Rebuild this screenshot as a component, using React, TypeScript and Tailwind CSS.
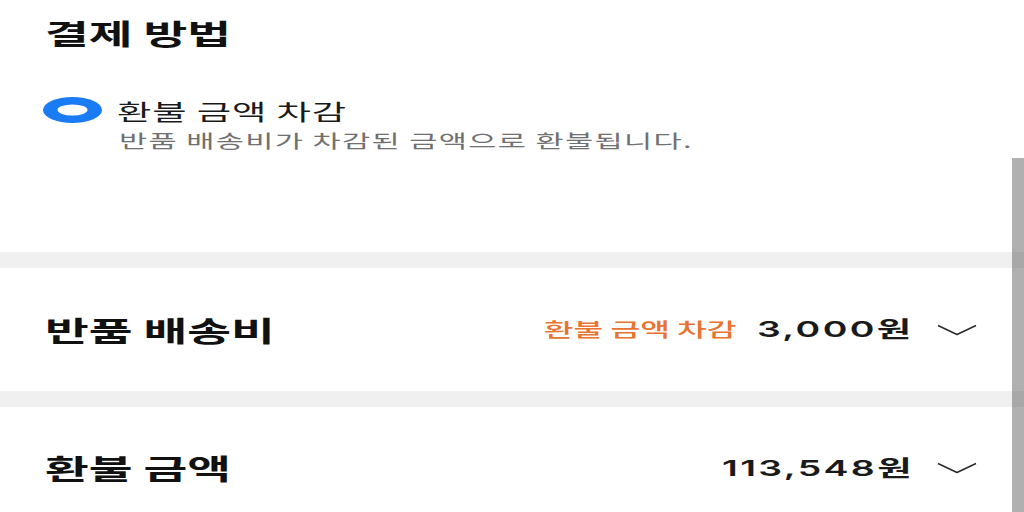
const kr = "font-['Noto_Sans_CJK_KR',sans-serif]";
const num = "font-['Inter','Noto_Sans_CJK_KR',sans-serif]";
// stretched type, the layout box keeps its natural width
const wideL = "inline-block origin-left scale-x-[1.7] whitespace-nowrap";
const wideR = "inline-block origin-right scale-x-[1.7] whitespace-nowrap";

function Chevron() {
  return (
    <svg width="40" height="12" viewBox="0 0 40 12" className="shrink-0">
      <path d="M1 1.5 L20 10.5 L39 1.5" fill="none" stroke="#2a2a2a" strokeWidth="1.5" strokeLinejoin="round" />
    </svg>
  );
}

function RadioOn() {
  return (
    <svg width="59" height="26" viewBox="0 0 59 26" className="shrink-0">
      <ellipse cx="29.5" cy="13" rx="29.5" ry="13" fill="#1a7cf5" />
      <ellipse cx="29.5" cy="13" rx="15" ry="5.5" fill="#fff" />
    </svg>
  );
}

function Divider() {
  return <div className="h-[16px] bg-[#f0f0f0]" />;
}

function SummaryRow({ label, note, amount, height }: { label: string; note?: string; amount: string; height: string }) {
  return (
    <div className={`flex items-center justify-between pl-[45px] pr-[47px] ${height}`}>
      <span className={`${wideL} ${kr} text-[28px] leading-[36px] font-bold text-[#111]`}>{label}</span>
      <div className="flex items-center">
        <span className={`${wideR} flex items-center`}>
          {note && <span className={`${kr} text-[19px] font-medium text-[#e8732e] mr-[12px]`}>{note}</span>}
          <span className={`${num} proportional-nums text-[22px] font-semibold text-[#1a1a1a] tracking-[1.4px]`}>{amount}</span>
        </span>
        <span className="ml-[23px] flex">
          <Chevron />
        </span>
      </div>
    </div>
  );
}

export default function App() {
  return (
    <div className="relative w-full h-[512px] overflow-hidden bg-white">
      <section className="h-[252px] pt-[15px]">
        <h2 className={`pl-[45px] ${kr} text-[28px] leading-[36px] font-bold text-[#111]`}>
          <span className={wideL}>결제 방법</span>
        </h2>

        <label className="mt-[44px] flex items-center pl-[43px]">
          <RadioOn />
          <span className={`ml-[15px] ${kr} text-[22px] leading-[30px] tracking-[0.5px] text-[#1a1a1a]`}>
            <span className={wideL}>환불 금액 차감</span>
          </span>
        </label>
        <p className={`mt-[2px] pl-[119px] ${kr} text-[18px] leading-[26px] tracking-[0.8px] text-[#707070]`}>
          <span className={wideL}>반품 배송비가 차감된 금액으로 환불됩니다.</span>
        </p>
      </section>

      <Divider />
      <SummaryRow label="반품 배송비" note="환불 금액 차감" amount="3,000원" height="h-[123px]" />
      <Divider />
      <SummaryRow label="환불 금액" amount="113,548원" height="h-[122px]" />

      {/* scroll indicator */}
      <div className="absolute right-0 top-[158px] bottom-0 w-[12px] bg-[rgba(87,87,87,0.47)]" />
    </div>
  );
}
